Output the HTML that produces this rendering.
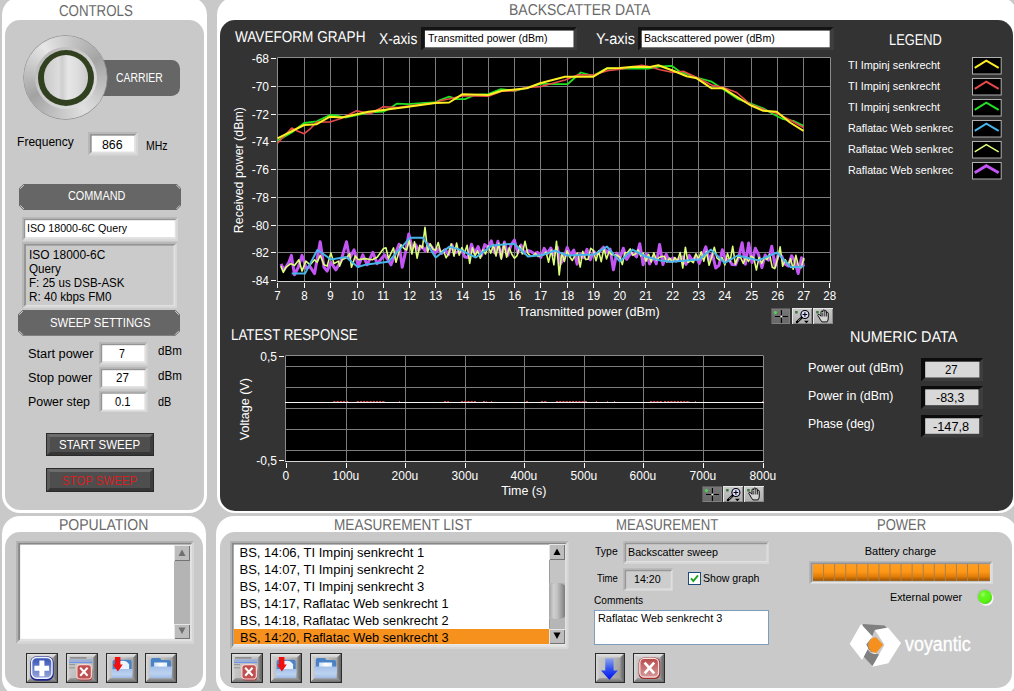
<!DOCTYPE html>
<html><head><meta charset="utf-8"><title>ui</title>
<style>
html,body{margin:0;padding:0;}
body{width:1014px;height:691px;overflow:hidden;background:#c9c9c9;font-family:"Liberation Sans", sans-serif;position:relative;}
#root{position:absolute;left:0;top:0;width:1014px;height:691px;overflow:hidden;}
#root div{box-sizing:content-box;}
</style></head><body><div id="root">
<div style="position:absolute;left:2px;top:-3px;width:205px;height:516.2px;background:#fff;border-radius:18px;"></div>
<div style="position:absolute;left:5px;top:20.2px;width:198.8px;height:490.3px;background:#c9c9c9;border-radius:15px;"></div>
<div style="position:absolute;left:217px;top:-3px;width:800px;height:516.2px;background:#fff;border-radius:18px;"></div>
<div style="position:absolute;left:220.3px;top:20.3px;width:792.7px;height:490.5px;background:#333;border-radius:15px;"></div>
<div style="position:absolute;left:2px;top:515.7px;width:204px;height:180px;background:#fff;border-radius:18px;"></div>
<div style="position:absolute;left:5px;top:532.3px;width:197.6px;height:156.2px;background:#c9c9c9;border-radius:15px;"></div>
<div style="position:absolute;left:216px;top:515.7px;width:801px;height:180px;background:#fff;border-radius:18px;"></div>
<div style="position:absolute;left:219.5px;top:532.3px;width:792.5px;height:156.2px;background:#c9c9c9;border-radius:15px;"></div>
<svg style="position:absolute;left:0;top:0" width="1014" height="691" viewBox="0 0 1014 691"><rect x="277" y="57" width="554" height="225" fill="#000"/><line x1="304.5" y1="57" x2="304.5" y2="282" stroke="#7c7c7c" stroke-width="1"/><line x1="330.5" y1="57" x2="330.5" y2="282" stroke="#7c7c7c" stroke-width="1"/><line x1="357.5" y1="57" x2="357.5" y2="282" stroke="#7c7c7c" stroke-width="1"/><line x1="383.5" y1="57" x2="383.5" y2="282" stroke="#7c7c7c" stroke-width="1"/><line x1="409.5" y1="57" x2="409.5" y2="282" stroke="#7c7c7c" stroke-width="1"/><line x1="435.5" y1="57" x2="435.5" y2="282" stroke="#7c7c7c" stroke-width="1"/><line x1="462.5" y1="57" x2="462.5" y2="282" stroke="#7c7c7c" stroke-width="1"/><line x1="488.5" y1="57" x2="488.5" y2="282" stroke="#7c7c7c" stroke-width="1"/><line x1="514.5" y1="57" x2="514.5" y2="282" stroke="#7c7c7c" stroke-width="1"/><line x1="540.5" y1="57" x2="540.5" y2="282" stroke="#7c7c7c" stroke-width="1"/><line x1="567.5" y1="57" x2="567.5" y2="282" stroke="#7c7c7c" stroke-width="1"/><line x1="593.5" y1="57" x2="593.5" y2="282" stroke="#7c7c7c" stroke-width="1"/><line x1="619.5" y1="57" x2="619.5" y2="282" stroke="#7c7c7c" stroke-width="1"/><line x1="645.5" y1="57" x2="645.5" y2="282" stroke="#7c7c7c" stroke-width="1"/><line x1="672.5" y1="57" x2="672.5" y2="282" stroke="#7c7c7c" stroke-width="1"/><line x1="698.5" y1="57" x2="698.5" y2="282" stroke="#7c7c7c" stroke-width="1"/><line x1="724.5" y1="57" x2="724.5" y2="282" stroke="#7c7c7c" stroke-width="1"/><line x1="751.5" y1="57" x2="751.5" y2="282" stroke="#7c7c7c" stroke-width="1"/><line x1="777.5" y1="57" x2="777.5" y2="282" stroke="#7c7c7c" stroke-width="1"/><line x1="803.5" y1="57" x2="803.5" y2="282" stroke="#7c7c7c" stroke-width="1"/><line x1="277" y1="252.5" x2="831" y2="252.5" stroke="#7c7c7c" stroke-width="1"/><line x1="277" y1="225.5" x2="831" y2="225.5" stroke="#7c7c7c" stroke-width="1"/><line x1="277" y1="197.5" x2="831" y2="197.5" stroke="#7c7c7c" stroke-width="1"/><line x1="277" y1="169.5" x2="831" y2="169.5" stroke="#7c7c7c" stroke-width="1"/><line x1="277" y1="141.5" x2="831" y2="141.5" stroke="#7c7c7c" stroke-width="1"/><line x1="277" y1="114.5" x2="831" y2="114.5" stroke="#7c7c7c" stroke-width="1"/><line x1="277" y1="86.5" x2="831" y2="86.5" stroke="#7c7c7c" stroke-width="1"/><path d="M277.5 282V57.5H830.5V282" fill="none" stroke="#8c8c8c" stroke-width="1"/><polyline points="281.0,264.0 284.0,270.0 288.9,262.3 291.4,255.4 294.5,274.8 298.3,267.3 302.0,255.4 306.4,268.6 309.6,266.1 314.6,273.6 320.2,241.7 324.0,267.3 327.1,271.1 330.9,262.3 335.9,269.8 340.9,261.1 346.5,241.7 349.6,258.6 354.0,249.8 358.4,266.1 362.8,254.8 367.2,264.8 372.8,252.3 377.2,263.6 384.7,254.8 391.0,264.8 399.1,244.2 402.2,267.3 405.5,252.1 408.8,234.0 412.1,247.9 415.4,244.6 418.7,250.3 422.0,246.1 425.3,251.1 428.6,244.0 431.9,247.0 435.2,252.8 438.5,248.7 441.8,253.3 445.1,249.5 448.4,254.8 451.7,244.6 455.0,252.6 458.3,251.9 461.6,250.3 464.9,257.0 468.2,257.5 471.5,244.3 474.8,253.2 478.1,246.6 481.4,255.9 484.7,244.6 488.0,247.6 491.3,240.8 494.6,252.9 497.9,241.3 501.2,257.4 504.5,242.0 507.8,255.4 511.1,244.9 514.4,240.0 517.7,253.0 521.0,245.1 524.3,253.1 527.6,250.4 530.9,251.4 534.2,253.7 537.5,252.4 540.8,257.4 544.1,248.4 547.4,253.5 550.7,248.0 554.0,255.0 557.3,247.0 560.6,263.7 563.9,258.2 567.2,247.5 570.5,255.2 573.8,250.0 577.1,264.1 580.4,253.9 583.7,257.5 587.0,249.4 590.3,259.8 593.6,251.4 596.9,254.5 600.2,250.7 603.5,247.2 606.8,252.3 610.1,249.0 613.4,269.8 616.7,253.1 620.0,257.9 623.3,248.2 626.6,259.4 629.9,254.5 633.2,253.2 636.5,256.8 639.8,243.7 643.1,264.7 646.4,254.1 649.7,263.9 653.0,256.5 656.3,263.8 659.6,244.4 662.9,264.5 666.2,254.3 669.5,261.5 672.8,257.9 676.1,261.1 679.4,259.1 682.7,256.8 686.0,264.3 689.3,255.4 692.6,261.0 695.9,255.9 699.2,263.5 702.5,255.3 705.8,246.9 709.1,259.8 712.4,253.8 715.7,268.0 719.0,265.3 722.3,249.7 725.6,259.4 728.9,259.4 732.2,264.6 735.5,264.8 738.8,257.0 742.1,242.8 745.4,264.3 748.7,243.0 752.0,262.6 755.3,248.2 758.6,254.8 761.9,267.6 765.2,255.0 768.5,260.2 771.8,246.2 775.1,266.6 778.4,253.6 781.7,256.2 785.0,264.0 788.3,266.1 791.6,255.7 794.9,261.6 798.2,273.5 801.5,257.7 803.6,266.5" fill="none" stroke="#c455f5" stroke-width="3" stroke-linejoin="round" stroke-linejoin="miter"/><polyline points="280.8,266.1 283.3,272.3 285.8,267.3 290.8,263.6 294.5,265.5 298.9,259.8 302.0,271.1 305.8,261.1 310.2,264.8 314.6,259.8 317.1,262.3 320.2,255.4 324.0,264.8 327.1,266.1 330.9,252.9 334.0,263.6 338.4,261.1 339.6,266.1 342.1,259.8 347.1,257.3 349.6,253.6 351.5,267.3 355.3,256.1 358.4,259.8 364.7,258.6 372.2,259.8 377.2,257.3 383.5,248.5 386.0,247.9 388.5,258.6 393.5,247.9 396.0,262.3 401.0,244.8 404.0,248.5 406.6,250.0 409.3,240.4 411.9,254.0 414.5,241.9 417.1,258.1 419.8,245.4 422.4,248.0 425.0,227.3 427.7,251.9 430.3,243.8 432.9,249.1 435.6,250.3 438.2,242.5 440.8,252.9 443.4,250.2 446.1,257.8 448.7,253.5 451.3,243.9 454.0,256.2 456.6,243.1 459.2,255.2 461.9,247.6 464.5,253.0 467.1,245.3 469.7,263.4 472.4,247.7 475.0,255.8 477.6,250.9 480.3,258.3 482.9,249.8 485.5,254.0 488.2,246.0 490.8,253.1 493.4,244.9 496.0,256.0 498.7,243.3 501.3,259.1 503.9,243.2 506.6,257.2 509.2,247.7 511.8,254.3 514.5,258.3 517.1,255.6 519.7,245.7 522.3,253.9 525.0,241.3 527.6,252.9 530.2,255.7 532.9,256.2 535.5,253.4 538.1,256.5 540.8,255.4 543.4,254.8 546.0,252.0 548.6,262.2 551.3,250.1 553.9,264.8 556.5,241.3 559.2,274.9 561.8,253.0 564.4,261.4 567.1,250.8 569.7,256.7 572.3,260.5 574.9,255.6 577.6,253.2 580.2,267.0 582.8,251.4 585.5,259.4 588.1,259.3 590.7,248.3 593.4,250.3 596.0,260.8 598.6,250.9 601.2,261.6 603.9,248.3 606.5,258.9 609.1,251.6 611.8,254.7 614.4,254.8 617.0,255.3 619.7,257.0 622.3,264.6 624.9,252.7 627.5,252.5 630.2,248.9 632.8,255.3 635.4,254.1 638.1,249.9 640.7,256.0 643.3,253.1 646.0,261.3 648.6,254.2 651.2,262.0 653.8,252.8 656.5,260.2 659.1,257.5 661.7,256.5 664.4,256.4 667.0,262.1 669.6,258.0 672.3,262.3 674.9,257.5 677.5,260.9 680.1,252.5 682.8,268.0 685.4,247.2 688.0,262.5 690.7,260.6 693.3,262.7 695.9,253.7 698.6,259.1 701.2,251.8 703.8,261.3 706.4,251.4 709.1,265.3 711.7,257.3 714.3,247.2 717.0,258.1 719.6,260.0 722.2,257.7 724.9,264.9 727.5,253.4 730.1,261.4 732.7,246.3 735.4,264.3 738.0,256.9 740.6,257.4 743.3,263.5 745.9,256.9 748.5,261.5 751.2,256.1 753.8,257.9 756.4,270.0 759.0,257.3 761.7,263.5 764.3,257.5 766.9,259.6 769.6,254.4 772.2,267.2 774.8,268.6 777.5,259.6 780.1,246.9 782.7,266.3 785.3,259.8 788.0,264.9 790.6,258.8 793.2,269.2 795.9,255.4 798.5,266.4 801.1,267.9 803.8,258.4 803.6,261.3" fill="none" stroke="#dcff7a" stroke-width="1.6" stroke-linejoin="round" /><polyline points="291.7,273.6 305.0,273.6 317.3,250.0 331.0,259.4 346.0,257.0 357.8,267.0 366.6,264.4 388.3,261.8 410.0,237.8 422.9,237.8 435.7,257.5 449.5,246.6 460.0,249.6 475.8,257.5 491.6,245.6 514.2,243.7 528.0,256.5 542.8,255.0 554.7,250.6 567.5,255.5 594.0,254.5 607.0,246.6 619.8,261.4 632.6,249.6 645.4,256.5 660.0,260.4 671.6,261.8 699.2,259.4 711.0,249.6 724.8,263.0 737.6,255.5 750.5,258.5 758.3,260.4 777.0,252.5 790.9,267.3 803.7,266.4" fill="none" stroke="#46b4ea" stroke-width="2" stroke-linejoin="round" /><polyline points="277.5,140.8 291.7,132.5 304.2,123.0 316.7,121.3 330.0,115.0 336.7,115.5 345.0,117.5 368.3,112.5 383.3,111.7 390.0,108.3 396.7,103.7 408.3,104.2 425.0,103.0 435.0,102.5 440.0,100.0 449.2,96.7 456.7,99.2 465.0,99.2 475.0,95.0 488.3,94.2 500.8,89.2 515.0,90.8 528.3,87.5 541.7,83.7 555.0,84.2 567.5,84.2 580.8,72.5 593.3,75.8 606.7,68.3 633.3,68.7 648.3,68.7 660.0,66.3 671.7,65.8 680.0,71.7 696.7,77.5 711.7,81.7 723.3,89.2 738.3,99.2 750.0,103.3 763.3,108.3 773.3,114.2 783.3,119.2 793.3,120.8 803.5,125.8" fill="none" stroke="#22e022" stroke-width="1.8" stroke-linejoin="round" /><polyline points="277.5,143.3 291.7,128.0 296.7,130.8 304.2,133.7 310.8,128.3 316.7,122.0 330.0,122.0 341.7,118.3 356.7,110.8 361.7,111.7 370.0,113.7 383.3,106.7 398.3,107.5 410.0,105.8 435.0,103.0 440.0,100.8 450.0,98.7 462.5,95.8 488.3,96.3 501.7,91.3 515.0,90.8 526.7,87.5 540.0,86.7 565.0,80.0 578.3,74.7 593.3,75.0 607.5,70.8 620.0,69.2 641.7,65.3 650.0,66.7 660.0,69.7 673.3,72.5 683.3,71.3 696.7,77.5 711.7,85.0 723.3,87.5 736.7,92.5 750.0,104.2 766.7,110.8 776.7,113.3 790.0,120.0 803.5,127.5" fill="none" stroke="#e84a4a" stroke-width="1.6" stroke-linejoin="round" /><polyline points="277.5,138.3 304.2,125.0 316.7,124.2 330.0,116.7 341.7,117.5 368.3,111.7 383.3,110.0 408.3,106.7 435.0,103.0 449.2,102.5 462.5,94.2 488.3,95.0 501.7,90.8 526.7,88.3 540.0,83.3 565.0,76.7 593.3,76.7 607.5,68.2 620.0,68.0 633.3,66.7 650.0,67.0 658.3,65.3 673.3,70.8 686.7,76.3 696.7,78.3 711.7,88.3 723.3,88.3 750.0,105.0 763.3,110.8 776.7,111.7 790.0,122.5 803.5,130.8" fill="none" stroke="#ffee22" stroke-width="2.0" stroke-linejoin="round" /><line x1="277" y1="281.5" x2="831" y2="281.5" stroke="#d2d2d2" stroke-width="1"/><line x1="277.5" y1="283" x2="277.5" y2="288" stroke="#fff" stroke-width="1"/><line x1="304.5" y1="283" x2="304.5" y2="288" stroke="#fff" stroke-width="1"/><line x1="330.5" y1="283" x2="330.5" y2="288" stroke="#fff" stroke-width="1"/><line x1="357.5" y1="283" x2="357.5" y2="288" stroke="#fff" stroke-width="1"/><line x1="383.5" y1="283" x2="383.5" y2="288" stroke="#fff" stroke-width="1"/><line x1="409.5" y1="283" x2="409.5" y2="288" stroke="#fff" stroke-width="1"/><line x1="435.5" y1="283" x2="435.5" y2="288" stroke="#fff" stroke-width="1"/><line x1="462.5" y1="283" x2="462.5" y2="288" stroke="#fff" stroke-width="1"/><line x1="488.5" y1="283" x2="488.5" y2="288" stroke="#fff" stroke-width="1"/><line x1="514.5" y1="283" x2="514.5" y2="288" stroke="#fff" stroke-width="1"/><line x1="540.5" y1="283" x2="540.5" y2="288" stroke="#fff" stroke-width="1"/><line x1="567.5" y1="283" x2="567.5" y2="288" stroke="#fff" stroke-width="1"/><line x1="593.5" y1="283" x2="593.5" y2="288" stroke="#fff" stroke-width="1"/><line x1="619.5" y1="283" x2="619.5" y2="288" stroke="#fff" stroke-width="1"/><line x1="645.5" y1="283" x2="645.5" y2="288" stroke="#fff" stroke-width="1"/><line x1="672.5" y1="283" x2="672.5" y2="288" stroke="#fff" stroke-width="1"/><line x1="698.5" y1="283" x2="698.5" y2="288" stroke="#fff" stroke-width="1"/><line x1="724.5" y1="283" x2="724.5" y2="288" stroke="#fff" stroke-width="1"/><line x1="751.5" y1="283" x2="751.5" y2="288" stroke="#fff" stroke-width="1"/><line x1="777.5" y1="283" x2="777.5" y2="288" stroke="#fff" stroke-width="1"/><line x1="803.5" y1="283" x2="803.5" y2="288" stroke="#fff" stroke-width="1"/><line x1="829.5" y1="283" x2="829.5" y2="288" stroke="#fff" stroke-width="1"/><line x1="271" y1="280.5" x2="276" y2="280.5" stroke="#fff" stroke-width="1"/><line x1="271" y1="252.5" x2="276" y2="252.5" stroke="#fff" stroke-width="1"/><line x1="271" y1="225.5" x2="276" y2="225.5" stroke="#fff" stroke-width="1"/><line x1="271" y1="197.5" x2="276" y2="197.5" stroke="#fff" stroke-width="1"/><line x1="271" y1="169.5" x2="276" y2="169.5" stroke="#fff" stroke-width="1"/><line x1="271" y1="141.5" x2="276" y2="141.5" stroke="#fff" stroke-width="1"/><line x1="271" y1="114.5" x2="276" y2="114.5" stroke="#fff" stroke-width="1"/><line x1="271" y1="86.5" x2="276" y2="86.5" stroke="#fff" stroke-width="1"/><line x1="271" y1="58.5" x2="276" y2="58.5" stroke="#fff" stroke-width="1"/><rect x="285" y="355" width="479" height="107" fill="#000"/><line x1="346.5" y1="355" x2="346.5" y2="462" stroke="#7c7c7c" stroke-width="1"/><line x1="405.5" y1="355" x2="405.5" y2="462" stroke="#7c7c7c" stroke-width="1"/><line x1="465.5" y1="355" x2="465.5" y2="462" stroke="#7c7c7c" stroke-width="1"/><line x1="524.5" y1="355" x2="524.5" y2="462" stroke="#7c7c7c" stroke-width="1"/><line x1="584.5" y1="355" x2="584.5" y2="462" stroke="#7c7c7c" stroke-width="1"/><line x1="643.5" y1="355" x2="643.5" y2="462" stroke="#7c7c7c" stroke-width="1"/><line x1="703.5" y1="355" x2="703.5" y2="462" stroke="#7c7c7c" stroke-width="1"/><line x1="285" y1="366.5" x2="764" y2="366.5" stroke="#7c7c7c" stroke-width="1"/><line x1="285" y1="387.5" x2="764" y2="387.5" stroke="#7c7c7c" stroke-width="1"/><line x1="285" y1="408.5" x2="764" y2="408.5" stroke="#7c7c7c" stroke-width="1"/><line x1="285" y1="429.5" x2="764" y2="429.5" stroke="#7c7c7c" stroke-width="1"/><line x1="285" y1="450.5" x2="764" y2="450.5" stroke="#7c7c7c" stroke-width="1"/><path d="M285.5 462V355.5H763.5V462" fill="none" stroke="#8c8c8c" stroke-width="1"/><line x1="285" y1="461.5" x2="764" y2="461.5" stroke="#d4d4d4" stroke-width="1"/><line x1="285" y1="402.5" x2="764" y2="402.5" stroke="#f6f6f6" stroke-width="1"/><line x1="333.3" y1="401.5" x2="349" y2="401.5" stroke="#e05050" stroke-width="0.9" stroke-dasharray="2.2 1"/><line x1="356.7" y1="401.5" x2="385" y2="401.5" stroke="#e05050" stroke-width="0.9" stroke-dasharray="2.2 1"/><line x1="399" y1="401.5" x2="400" y2="401.5" stroke="#e05050" stroke-width="0.9" stroke-dasharray="2.2 1"/><line x1="444" y1="401.5" x2="449" y2="401.5" stroke="#e05050" stroke-width="0.9" stroke-dasharray="2.2 1"/><line x1="461" y1="401.5" x2="476" y2="401.5" stroke="#e05050" stroke-width="0.9" stroke-dasharray="2.2 1"/><line x1="483" y1="401.5" x2="487" y2="401.5" stroke="#e05050" stroke-width="0.9" stroke-dasharray="2.2 1"/><line x1="491" y1="401.5" x2="492" y2="401.5" stroke="#e05050" stroke-width="0.9" stroke-dasharray="2.2 1"/><line x1="526" y1="401.5" x2="528" y2="401.5" stroke="#e05050" stroke-width="0.9" stroke-dasharray="2.2 1"/><line x1="541" y1="401.5" x2="547" y2="401.5" stroke="#e05050" stroke-width="0.9" stroke-dasharray="2.2 1"/><line x1="556" y1="401.5" x2="587" y2="401.5" stroke="#e05050" stroke-width="0.9" stroke-dasharray="2.2 1"/><line x1="596" y1="401.5" x2="597" y2="401.5" stroke="#e05050" stroke-width="0.9" stroke-dasharray="2.2 1"/><line x1="607" y1="401.5" x2="608" y2="401.5" stroke="#e05050" stroke-width="0.9" stroke-dasharray="2.2 1"/><line x1="614" y1="401.5" x2="615" y2="401.5" stroke="#e05050" stroke-width="0.9" stroke-dasharray="2.2 1"/><line x1="650" y1="401.5" x2="662" y2="401.5" stroke="#e05050" stroke-width="0.9" stroke-dasharray="2.2 1"/><line x1="664" y1="401.5" x2="690" y2="401.5" stroke="#e05050" stroke-width="0.9" stroke-dasharray="2.2 1"/><line x1="695" y1="401.5" x2="696" y2="401.5" stroke="#e05050" stroke-width="0.9" stroke-dasharray="2.2 1"/><line x1="762" y1="401.5" x2="763" y2="401.5" stroke="#e05050" stroke-width="0.9" stroke-dasharray="2.2 1"/><line x1="286.5" y1="463" x2="286.5" y2="468" stroke="#fff" stroke-width="1"/><line x1="346.5" y1="463" x2="346.5" y2="468" stroke="#fff" stroke-width="1"/><line x1="405.5" y1="463" x2="405.5" y2="468" stroke="#fff" stroke-width="1"/><line x1="465.5" y1="463" x2="465.5" y2="468" stroke="#fff" stroke-width="1"/><line x1="524.5" y1="463" x2="524.5" y2="468" stroke="#fff" stroke-width="1"/><line x1="584.5" y1="463" x2="584.5" y2="468" stroke="#fff" stroke-width="1"/><line x1="643.5" y1="463" x2="643.5" y2="468" stroke="#fff" stroke-width="1"/><line x1="703.5" y1="463" x2="703.5" y2="468" stroke="#fff" stroke-width="1"/><line x1="763.5" y1="463" x2="763.5" y2="468" stroke="#fff" stroke-width="1"/><line x1="279" y1="356.5" x2="284" y2="356.5" stroke="#fff" stroke-width="1"/><line x1="279" y1="460.5" x2="284" y2="460.5" stroke="#fff" stroke-width="1"/></svg>
<div style="position:absolute;left:58.70px;top:2.60px;font-size:15.8px;line-height:15.8px;color:#686868;white-space:nowrap;transform:rotate(0.03deg) scale(0.8407,1.0000);transform-origin:left 13.40px;">CONTROLS</div>
<div style="position:absolute;left:508.70px;top:1.60px;font-size:15.8px;line-height:15.8px;color:#686868;white-space:nowrap;transform:rotate(0.03deg) scale(0.8844,1.0000);transform-origin:left 13.40px;">BACKSCATTER DATA</div>
<div style="position:absolute;left:58.70px;top:516.60px;font-size:15.8px;line-height:15.8px;color:#686868;white-space:nowrap;transform:rotate(0.03deg) scale(0.8871,1.0000);transform-origin:left 13.40px;">POPULATION</div>
<div style="position:absolute;left:333.70px;top:516.60px;font-size:15.8px;line-height:15.8px;color:#686868;white-space:nowrap;transform:rotate(0.03deg) scale(0.8605,1.0000);transform-origin:left 13.40px;">MEASUREMENT LIST</div>
<div style="position:absolute;left:616.30px;top:516.60px;font-size:15.8px;line-height:15.8px;color:#686868;white-space:nowrap;transform:rotate(0.03deg) scale(0.8332,1.0000);transform-origin:left 13.40px;">MEASUREMENT</div>
<div style="position:absolute;left:876.70px;top:516.60px;font-size:15.8px;line-height:15.8px;color:#686868;white-space:nowrap;transform:rotate(0.03deg) scale(0.8226,1.0000);transform-origin:left 13.40px;">POWER</div>
<div style="position:absolute;left:99px;top:59.9px;width:81px;height:35.8px;background:#666;border-radius:0 8.5px 8.5px 0;"></div>
<div style="position:absolute;left:116.30px;top:72.00px;font-size:12px;line-height:12px;color:#fff;white-space:nowrap;transform:scale(0.8646,1.0000);transform-origin:left 10.00px;">CARRIER</div>
<div style="position:absolute;left:24.3px;top:36.1px;width:83px;height:83px;border-radius:50%;background:conic-gradient(from -35deg,#e6e6e6,#c4c4c4 45deg,#a4a4a4 95deg,#c0c0c0 140deg,#e0e0e0 185deg,#c2c2c2 230deg,#a2a2a2 275deg,#c6c6c6 320deg,#e6e6e6);box-shadow:0 0 0 0.7px #8e8e8e;"></div>
<div style="position:absolute;left:34.7px;top:46.7px;width:62px;height:62px;border-radius:50%;background:linear-gradient(135deg,#b4b4b4,#cecece 50%,#e2e2e2);"></div>
<div style="position:absolute;left:37.9px;top:49.5px;width:56.5px;height:56.5px;border-radius:50%;background:#31401f;"></div>
<div style="position:absolute;left:43.8px;top:55.4px;width:44.7px;height:44.7px;border-radius:50%;background:linear-gradient(90deg,#cacaca,#dcdcdc 33%,#cecece 41%,#e6e6e6 55%,#dedede 75%,#cacaca);"></div>
<div style="position:absolute;left:17.10px;top:136.00px;font-size:12px;line-height:12px;color:#000;white-space:nowrap;">Frequency</div>
<svg style="position:absolute;left:88.00px;top:132.30px" width="50.10" height="23.50" viewBox="0 0 50.10 23.50"><path d="M0.00 23.50L50.10 23.50L50.10 0.00L48.15 1.90L48.15 21.60L1.90 21.60Z" fill="#d6d6d6"/><path d="M0.00 0.00L50.10 0.00L48.15 1.90L1.90 1.90L1.90 21.60L0.00 23.50Z" fill="#b8b8b8"/><path d="M1.90 21.60L48.15 21.60L48.15 1.90L46.20 3.80L46.20 19.70L3.80 19.70Z" fill="#e1e1e1"/><path d="M1.90 1.90L48.15 1.90L46.20 3.80L3.80 3.80L3.80 19.70L1.90 21.60Z" fill="#949494"/><rect x="3.80" y="3.80" width="42.40" height="15.90" fill="#fff"/></svg>
<div style="position:absolute;left:102.20px;top:139.00px;font-size:12px;line-height:12px;color:#000;white-space:nowrap;transform:scale(1.0286,1.0000);transform-origin:left 10.00px;">866</div>
<div style="position:absolute;left:146.40px;top:140.00px;font-size:12px;line-height:12px;color:#000;white-space:nowrap;transform:scale(0.8758,1.0000);transform-origin:left 10.00px;">MHz</div>
<svg style="position:absolute;left:18.80px;top:183.80px" width="162.30" height="26.10" viewBox="0 0 162.30 26.10"><path d="M4.6 0H157.70L162.30 4.6V21.50L157.70 26.10H4.6L0 21.50V4.6Z" fill="#666"/><path d="M1.10 4.90L4.90 1.10M157.40 1.10L161.20 4.90M1.10 21.20L4.90 25.00M157.40 25.00L161.20 21.20" stroke="#d8d8d8" stroke-width="0.9" fill="none"/></svg><div style="position:absolute;left:68.30px;top:190.00px;font-size:12px;line-height:12px;color:#fff;white-space:nowrap;transform:scale(0.9063,1.0000);transform-origin:left 10.00px;">COMMAND</div>
<svg style="position:absolute;left:18.00px;top:310.00px" width="162.00" height="25.80" viewBox="0 0 162.00 25.80"><path d="M4.6 0H157.40L162.00 4.6V21.20L157.40 25.80H4.6L0 21.20V4.6Z" fill="#666"/><path d="M1.10 4.90L4.90 1.10M157.10 1.10L160.90 4.90M1.10 20.90L4.90 24.70M157.10 24.70L160.90 20.90" stroke="#d8d8d8" stroke-width="0.9" fill="none"/></svg><div style="position:absolute;left:50.30px;top:317.00px;font-size:12px;line-height:12px;color:#fff;white-space:nowrap;transform:scale(0.9438,1.0000);transform-origin:left 10.00px;">SWEEP SETTINGS</div>
<svg style="position:absolute;left:21.70px;top:216.90px" width="156.10" height="24.40" viewBox="0 0 156.10 24.40"><path d="M0.00 24.40L156.10 24.40L156.10 0.00L154.50 1.65L154.50 22.25L1.65 22.25Z" fill="#d6d6d6"/><path d="M0.00 0.00L156.10 0.00L154.50 1.65L1.65 1.65L1.65 22.25L0.00 24.40Z" fill="#b8b8b8"/><path d="M1.65 22.25L154.50 22.25L154.50 1.65L152.90 3.30L152.90 20.10L3.30 20.10Z" fill="#e1e1e1"/><path d="M1.65 1.65L154.50 1.65L152.90 3.30L3.30 3.30L3.30 20.10L1.65 22.25Z" fill="#949494"/><rect x="3.30" y="3.30" width="149.60" height="16.80" fill="#fff"/></svg>
<div style="position:absolute;left:27.00px;top:222.50px;font-size:11px;line-height:11px;color:#000;white-space:nowrap;transform:scale(0.9679,1.0000);transform-origin:left 9.50px;">ISO 18000-6C Query</div>
<svg style="position:absolute;left:21.70px;top:242.00px" width="155.80" height="66.30" viewBox="0 0 155.80 66.30"><path d="M0.00 66.30L155.80 66.30L155.80 0.00L153.55 1.90L153.55 64.50L2.05 64.50Z" fill="#d6d6d6"/><path d="M0.00 0.00L155.80 0.00L153.55 1.90L2.05 1.90L2.05 64.50L0.00 66.30Z" fill="#b8b8b8"/><path d="M2.05 64.50L153.55 64.50L153.55 1.90L151.30 3.80L151.30 62.70L4.10 62.70Z" fill="#e1e1e1"/><path d="M2.05 1.90L153.55 1.90L151.30 3.80L4.10 3.80L4.10 62.70L2.05 64.50Z" fill="#949494"/><rect x="4.10" y="3.80" width="147.20" height="58.90" fill="#cbcbcb"/></svg>
<div style="position:absolute;left:28.70px;top:249.00px;font-size:12px;line-height:12px;color:#000;white-space:nowrap;transform:scale(0.9944,1.0000);transform-origin:left 10.00px;">ISO 18000-6C</div>
<div style="position:absolute;left:28.70px;top:263.00px;font-size:12px;line-height:12px;color:#000;white-space:nowrap;transform:scale(0.9730,1.0000);transform-origin:left 10.00px;">Query</div>
<div style="position:absolute;left:28.70px;top:277.00px;font-size:12px;line-height:12px;color:#000;white-space:nowrap;transform:scale(0.9609,1.0000);transform-origin:left 10.00px;">F: 25 us DSB-ASK</div>
<div style="position:absolute;left:28.70px;top:291.00px;font-size:12px;line-height:12px;color:#000;white-space:nowrap;transform:scale(0.9750,1.0000);transform-origin:left 10.00px;">R: 40 kbps FM0</div>
<div style="position:absolute;left:27.50px;top:348.00px;font-size:12px;line-height:12px;color:#000;white-space:nowrap;transform:scale(1.0672,1.0000);transform-origin:left 10.00px;">Start power</div>
<svg style="position:absolute;left:99.20px;top:341.70px" width="48.80" height="23.00" viewBox="0 0 48.80 23.00"><path d="M0.00 23.00L48.80 23.00L48.80 0.00L47.15 1.65L47.15 21.25L1.65 21.25Z" fill="#d6d6d6"/><path d="M0.00 0.00L48.80 0.00L47.15 1.65L1.65 1.65L1.65 21.25L0.00 23.00Z" fill="#b8b8b8"/><path d="M1.65 21.25L47.15 21.25L47.15 1.65L45.50 3.30L45.50 19.50L3.30 19.50Z" fill="#e1e1e1"/><path d="M1.65 1.65L47.15 1.65L45.50 3.30L3.30 3.30L3.30 19.50L1.65 21.25Z" fill="#949494"/><rect x="3.30" y="3.30" width="42.20" height="16.20" fill="#fff"/></svg>
<div style="position:absolute;left:119.30px;top:348.00px;font-size:12px;line-height:12px;color:#000;white-space:nowrap;transform:scale(0.8838,1.0000);transform-origin:left 10.00px;">7</div>
<div style="position:absolute;left:157.50px;top:345.00px;font-size:12px;line-height:12px;color:#000;white-space:nowrap;transform:scale(0.9645,1.0000);transform-origin:left 10.00px;">dBm</div>
<div style="position:absolute;left:27.50px;top:372.00px;font-size:12px;line-height:12px;color:#000;white-space:nowrap;transform:scale(1.0573,1.0000);transform-origin:left 10.00px;">Stop power</div>
<svg style="position:absolute;left:99.20px;top:366.70px" width="48.80" height="22.50" viewBox="0 0 48.80 22.50"><path d="M0.00 22.50L48.80 22.50L48.80 0.00L47.15 1.65L47.15 20.80L1.65 20.80Z" fill="#d6d6d6"/><path d="M0.00 0.00L48.80 0.00L47.15 1.65L1.65 1.65L1.65 20.80L0.00 22.50Z" fill="#b8b8b8"/><path d="M1.65 20.80L47.15 20.80L47.15 1.65L45.50 3.30L45.50 19.10L3.30 19.10Z" fill="#e1e1e1"/><path d="M1.65 1.65L47.15 1.65L45.50 3.30L3.30 3.30L3.30 19.10L1.65 20.80Z" fill="#949494"/><rect x="3.30" y="3.30" width="42.20" height="15.80" fill="#fff"/></svg>
<div style="position:absolute;left:116.30px;top:372.00px;font-size:12px;line-height:12px;color:#000;white-space:nowrap;transform:scale(0.9662,1.0000);transform-origin:left 10.00px;">27</div>
<div style="position:absolute;left:157.50px;top:370.00px;font-size:12px;line-height:12px;color:#000;white-space:nowrap;transform:scale(0.9645,1.0000);transform-origin:left 10.00px;">dBm</div>
<div style="position:absolute;left:28.30px;top:396.00px;font-size:12px;line-height:12px;color:#000;white-space:nowrap;transform:scale(1.0326,1.0000);transform-origin:left 10.00px;">Power step</div>
<svg style="position:absolute;left:99.20px;top:390.50px" width="48.80" height="21.50" viewBox="0 0 48.80 21.50"><path d="M0.00 21.50L48.80 21.50L48.80 0.00L47.15 1.40L47.15 20.10L1.65 20.10Z" fill="#d6d6d6"/><path d="M0.00 0.00L48.80 0.00L47.15 1.40L1.65 1.40L1.65 20.10L0.00 21.50Z" fill="#b8b8b8"/><path d="M1.65 20.10L47.15 20.10L47.15 1.40L45.50 2.80L45.50 18.70L3.30 18.70Z" fill="#e1e1e1"/><path d="M1.65 1.40L47.15 1.40L45.50 2.80L3.30 2.80L3.30 18.70L1.65 20.10Z" fill="#949494"/><rect x="3.30" y="2.80" width="42.20" height="15.90" fill="#fff"/></svg>
<div style="position:absolute;left:114.50px;top:396.00px;font-size:12px;line-height:12px;color:#000;white-space:nowrap;transform:scale(0.9288,1.0000);transform-origin:left 10.00px;">0.1</div>
<div style="position:absolute;left:157.50px;top:396.00px;font-size:12px;line-height:12px;color:#000;white-space:nowrap;transform:scale(0.9060,1.0000);transform-origin:left 10.00px;">dB</div>
<div style="position:absolute;left:46.2px;top:433px;width:107.6px;height:22.8px;background:#2a2a2a;"></div><div style="position:absolute;left:47.2px;top:434px;width:99.60000000000001px;height:14.800000000000011px;background:#4e4e4e;border-style:solid;border-width:3px;border-color:#6c6c6c #3c3c3c #363636 #5c5c5c;"></div><div style="position:absolute;left:59.20px;top:439.00px;font-size:12px;line-height:12px;color:#fff;white-space:nowrap;transform:scale(0.9575,1.0000);transform-origin:left 10.00px;">START SWEEP</div>
<div style="position:absolute;left:46.2px;top:468px;width:107.6px;height:23.7px;background:#2a2a2a;"></div><div style="position:absolute;left:47.2px;top:469px;width:99.60000000000001px;height:15.699999999999989px;background:#4e4e4e;border-style:solid;border-width:3px;border-color:#6c6c6c #3c3c3c #363636 #5c5c5c;"></div><div style="position:absolute;left:62.20px;top:475.00px;font-size:12px;line-height:12px;color:#d42222;white-space:nowrap;transform:scale(0.9503,1.0000);transform-origin:left 10.00px;">STOP SWEEP</div>
<div style="position:absolute;left:235.00px;top:28.70px;font-size:15.6px;line-height:15.6px;color:#fff;white-space:nowrap;transform:rotate(0.03deg) scale(0.8703,1.0000);transform-origin:left 13.30px;">WAVEFORM GRAPH</div>
<div style="position:absolute;left:379.20px;top:30.70px;font-size:15.6px;line-height:15.6px;color:#fff;white-space:nowrap;transform:rotate(0.03deg) scale(0.8836,1.0000);transform-origin:left 13.30px;">X-axis</div>
<div style="position:absolute;left:595.80px;top:30.70px;font-size:15.6px;line-height:15.6px;color:#fff;white-space:nowrap;transform:rotate(0.03deg) scale(0.9281,1.0000);transform-origin:left 13.30px;">Y-axis</div>
<svg style="position:absolute;left:420.80px;top:26.70px" width="155.90" height="23.60" viewBox="0 0 155.90 23.60"><path d="M0.00 23.60L155.90 23.60L155.90 0.00L152.50 3.60L152.50 20.30L3.90 20.30Z" fill="#3e3e3e"/><path d="M0.00 0.00L155.90 0.00L152.50 3.60L3.90 3.60L3.90 20.30L0.00 23.60Z" fill="#141414"/><rect x="3.90" y="3.60" width="148.60" height="16.70" fill="#fff"/></svg><div style="position:absolute;left:427.50px;top:32.50px;font-size:11px;line-height:11px;color:#000;white-space:nowrap;transform:scale(0.9662,1.0000);transform-origin:left 9.50px;">Transmitted power (dBm)</div>
<svg style="position:absolute;left:638.30px;top:26.70px" width="195.90" height="23.60" viewBox="0 0 195.90 23.60"><path d="M0.00 23.60L195.90 23.60L195.90 0.00L191.70 3.60L191.70 20.30L3.70 20.30Z" fill="#3e3e3e"/><path d="M0.00 0.00L195.90 0.00L191.70 3.60L3.70 3.60L3.70 20.30L0.00 23.60Z" fill="#141414"/><rect x="3.70" y="3.60" width="188.00" height="16.70" fill="#fff"/></svg><div style="position:absolute;left:644.20px;top:32.50px;font-size:11px;line-height:11px;color:#000;white-space:nowrap;transform:scale(0.9638,1.0000);transform-origin:left 9.50px;">Backscattered power (dBm)</div>
<div style="position:absolute;left:889.20px;top:31.70px;font-size:15.6px;line-height:15.6px;color:#fff;white-space:nowrap;transform:rotate(0.03deg) scale(0.8230,1.0000);transform-origin:left 13.30px;">LEGEND</div>
<div style="position:absolute;left:251.65px;top:275.00px;font-size:12px;line-height:12px;color:#fff;white-space:nowrap;">-84</div>
<div style="position:absolute;left:251.65px;top:247.00px;font-size:12px;line-height:12px;color:#fff;white-space:nowrap;">-82</div>
<div style="position:absolute;left:251.65px;top:220.00px;font-size:12px;line-height:12px;color:#fff;white-space:nowrap;">-80</div>
<div style="position:absolute;left:251.65px;top:192.00px;font-size:12px;line-height:12px;color:#fff;white-space:nowrap;">-78</div>
<div style="position:absolute;left:251.65px;top:164.00px;font-size:12px;line-height:12px;color:#fff;white-space:nowrap;">-76</div>
<div style="position:absolute;left:251.65px;top:136.00px;font-size:12px;line-height:12px;color:#fff;white-space:nowrap;">-74</div>
<div style="position:absolute;left:251.65px;top:109.00px;font-size:12px;line-height:12px;color:#fff;white-space:nowrap;">-72</div>
<div style="position:absolute;left:251.65px;top:81.00px;font-size:12px;line-height:12px;color:#fff;white-space:nowrap;">-70</div>
<div style="position:absolute;left:251.65px;top:53.00px;font-size:12px;line-height:12px;color:#fff;white-space:nowrap;">-68</div>
<div style="position:absolute;left:273.96px;top:290.00px;font-size:12px;line-height:12px;color:#fff;white-space:nowrap;transform:scale(0.9600,1.0000);transform-origin:center 10.00px;">7</div>
<div style="position:absolute;left:300.96px;top:290.00px;font-size:12px;line-height:12px;color:#fff;white-space:nowrap;transform:scale(0.9600,1.0000);transform-origin:center 10.00px;">8</div>
<div style="position:absolute;left:326.96px;top:290.00px;font-size:12px;line-height:12px;color:#fff;white-space:nowrap;transform:scale(0.9600,1.0000);transform-origin:center 10.00px;">9</div>
<div style="position:absolute;left:350.62px;top:290.00px;font-size:12px;line-height:12px;color:#fff;white-space:nowrap;transform:scale(0.9600,1.0000);transform-origin:center 10.00px;">10</div>
<div style="position:absolute;left:377.07px;top:290.00px;font-size:12px;line-height:12px;color:#fff;white-space:nowrap;transform:scale(0.9600,1.0000);transform-origin:center 10.00px;">11</div>
<div style="position:absolute;left:402.62px;top:290.00px;font-size:12px;line-height:12px;color:#fff;white-space:nowrap;transform:scale(0.9600,1.0000);transform-origin:center 10.00px;">12</div>
<div style="position:absolute;left:428.62px;top:290.00px;font-size:12px;line-height:12px;color:#fff;white-space:nowrap;transform:scale(0.9600,1.0000);transform-origin:center 10.00px;">13</div>
<div style="position:absolute;left:455.62px;top:290.00px;font-size:12px;line-height:12px;color:#fff;white-space:nowrap;transform:scale(0.9600,1.0000);transform-origin:center 10.00px;">14</div>
<div style="position:absolute;left:481.62px;top:290.00px;font-size:12px;line-height:12px;color:#fff;white-space:nowrap;transform:scale(0.9600,1.0000);transform-origin:center 10.00px;">15</div>
<div style="position:absolute;left:507.62px;top:290.00px;font-size:12px;line-height:12px;color:#fff;white-space:nowrap;transform:scale(0.9600,1.0000);transform-origin:center 10.00px;">16</div>
<div style="position:absolute;left:533.62px;top:290.00px;font-size:12px;line-height:12px;color:#fff;white-space:nowrap;transform:scale(0.9600,1.0000);transform-origin:center 10.00px;">17</div>
<div style="position:absolute;left:560.62px;top:290.00px;font-size:12px;line-height:12px;color:#fff;white-space:nowrap;transform:scale(0.9600,1.0000);transform-origin:center 10.00px;">18</div>
<div style="position:absolute;left:586.62px;top:290.00px;font-size:12px;line-height:12px;color:#fff;white-space:nowrap;transform:scale(0.9600,1.0000);transform-origin:center 10.00px;">19</div>
<div style="position:absolute;left:612.62px;top:290.00px;font-size:12px;line-height:12px;color:#fff;white-space:nowrap;transform:scale(0.9600,1.0000);transform-origin:center 10.00px;">20</div>
<div style="position:absolute;left:638.62px;top:290.00px;font-size:12px;line-height:12px;color:#fff;white-space:nowrap;transform:scale(0.9600,1.0000);transform-origin:center 10.00px;">21</div>
<div style="position:absolute;left:665.62px;top:290.00px;font-size:12px;line-height:12px;color:#fff;white-space:nowrap;transform:scale(0.9600,1.0000);transform-origin:center 10.00px;">22</div>
<div style="position:absolute;left:691.62px;top:290.00px;font-size:12px;line-height:12px;color:#fff;white-space:nowrap;transform:scale(0.9600,1.0000);transform-origin:center 10.00px;">23</div>
<div style="position:absolute;left:717.62px;top:290.00px;font-size:12px;line-height:12px;color:#fff;white-space:nowrap;transform:scale(0.9600,1.0000);transform-origin:center 10.00px;">24</div>
<div style="position:absolute;left:744.62px;top:290.00px;font-size:12px;line-height:12px;color:#fff;white-space:nowrap;transform:scale(0.9600,1.0000);transform-origin:center 10.00px;">25</div>
<div style="position:absolute;left:770.62px;top:290.00px;font-size:12px;line-height:12px;color:#fff;white-space:nowrap;transform:scale(0.9600,1.0000);transform-origin:center 10.00px;">26</div>
<div style="position:absolute;left:796.62px;top:290.00px;font-size:12px;line-height:12px;color:#fff;white-space:nowrap;transform:scale(0.9600,1.0000);transform-origin:center 10.00px;">27</div>
<div style="position:absolute;left:822.62px;top:290.00px;font-size:12px;line-height:12px;color:#fff;white-space:nowrap;transform:scale(0.9600,1.0000);transform-origin:center 10.00px;">28</div>
<div style="position:absolute;left:518.30px;top:306.00px;font-size:12px;line-height:12px;color:#fff;white-space:nowrap;transform:scale(1.0500,1.0000);transform-origin:left 10.00px;">Transmitted power (dBm)</div>
<div style="position:absolute;left:177.49px;top:163.65px;width:125.09px;height:12.3px;font-size:12.3px;line-height:12.3px;color:#fff;white-space:nowrap;transform:rotate(-90deg) scaleX(1.0073);transform-origin:center center;">Received power (dBm)</div>
<div style="position:absolute;left:848.00px;top:59.50px;font-size:11px;line-height:11px;color:#fff;white-space:nowrap;transform:scale(0.9902,1.0000);transform-origin:left 9.50px;">TI Impinj senkrecht</div>
<svg style="position:absolute;left:972px;top:57px" width="30" height="18"><rect x="0.5" y="0.5" width="28.7" height="16.5" fill="#000" stroke="#b0b0b0"/><polyline points="2.7,10.8 14.3,3.7 26.7,10.8" fill="none" stroke="#ffee22" stroke-width="2"/></svg>
<div style="position:absolute;left:848.00px;top:80.50px;font-size:11px;line-height:11px;color:#fff;white-space:nowrap;transform:scale(0.9902,1.0000);transform-origin:left 9.50px;">TI Impinj senkrecht</div>
<svg style="position:absolute;left:972px;top:78px" width="30" height="18"><rect x="0.5" y="0.5" width="28.7" height="16.5" fill="#000" stroke="#b0b0b0"/><polyline points="2.7,10.8 14.3,3.7 26.7,10.8" fill="none" stroke="#e84a4a" stroke-width="2"/></svg>
<div style="position:absolute;left:848.00px;top:101.50px;font-size:11px;line-height:11px;color:#fff;white-space:nowrap;transform:scale(0.9902,1.0000);transform-origin:left 9.50px;">TI Impinj senkrecht</div>
<svg style="position:absolute;left:972px;top:99px" width="30" height="18"><rect x="0.5" y="0.5" width="28.7" height="16.5" fill="#000" stroke="#b0b0b0"/><polyline points="2.7,10.8 14.3,3.7 26.7,10.8" fill="none" stroke="#22e022" stroke-width="2"/></svg>
<div style="position:absolute;left:848.00px;top:122.50px;font-size:11px;line-height:11px;color:#fff;white-space:nowrap;transform:scale(0.9777,1.0000);transform-origin:left 9.50px;">Raflatac Web senkrec</div>
<svg style="position:absolute;left:972px;top:120px" width="30" height="18"><rect x="0.5" y="0.5" width="28.7" height="16.5" fill="#000" stroke="#b0b0b0"/><polyline points="2.7,10.8 14.3,3.7 26.7,10.8" fill="none" stroke="#46b4ea" stroke-width="2"/></svg>
<div style="position:absolute;left:848.00px;top:143.50px;font-size:11px;line-height:11px;color:#fff;white-space:nowrap;transform:scale(0.9777,1.0000);transform-origin:left 9.50px;">Raflatac Web senkrec</div>
<svg style="position:absolute;left:972px;top:141px" width="30" height="18"><rect x="0.5" y="0.5" width="28.7" height="16.5" fill="#000" stroke="#b0b0b0"/><polyline points="2.7,10.8 14.3,3.7 26.7,10.8" fill="none" stroke="#dcff7a" stroke-width="1.5"/></svg>
<div style="position:absolute;left:848.00px;top:164.50px;font-size:11px;line-height:11px;color:#fff;white-space:nowrap;transform:scale(0.9777,1.0000);transform-origin:left 9.50px;">Raflatac Web senkrec</div>
<svg style="position:absolute;left:972px;top:162px" width="30" height="18"><rect x="0.5" y="0.5" width="28.7" height="16.5" fill="#000" stroke="#b0b0b0"/><polyline points="2.7,10.8 14.3,3.7 26.7,10.8" fill="none" stroke="#c455f5" stroke-width="3"/></svg>
<div style="position:absolute;left:770.9px;top:308px;width:19.6px;height:16.1px;background:linear-gradient(180deg,#7a7a7a,#6e6e6e 50%,#686868);box-shadow:inset 1px 1px 0 #5a5a5a, inset -1px -1px 0 #808080;"></div><div style="position:absolute;left:792.0px;top:308px;width:19.6px;height:16.1px;background:linear-gradient(180deg,#cacaca,#bcbcbc 50%,#adadad);box-shadow:inset 1px 1px 0 #e6e6e6, inset -1px -1px 0 #8a8a8a;"></div><div style="position:absolute;left:813.1px;top:308px;width:19.8px;height:16.1px;background:linear-gradient(180deg,#cacaca,#bcbcbc 50%,#adadad);box-shadow:inset 1px 1px 0 #e6e6e6, inset -1px -1px 0 #8a8a8a;"></div><svg style="position:absolute;left:770.9px;top:308px" width="63" height="17" viewBox="0 0 63 17"><path d="M4 8.500H17M10.400 2V15" stroke="#000" stroke-width="1.100" fill="none"/><circle cx="10.400" cy="8.500" r="1.100" fill="#fff"/><path d="M2.800 4.600H6M4.400 3V6.200" stroke="#4cd84c" stroke-width="1.500"/><rect x="24.1" y="3" width="2.500" height="2.500" fill="#3c7a3c"/><circle cx="33.9" cy="6.500" r="4" fill="#dcdcff" stroke="#000" stroke-width="1.100"/><path d="M31.600 6.500H36.200M33.900 4.200V8.800" stroke="#000" stroke-width="1.100"/><path d="M30.700 9.700L25.900 14.100" stroke="#000" stroke-width="2.300" stroke-linecap="round"/><path d="M29.600 10.700L27 13.100" stroke="#bbb" stroke-width="0.700"/><path d="M33 12.800h4.800l-2.400 2.500z" fill="#000"/><rect x="45.2" y="3" width="2.500" height="2.500" fill="#3c7a3c"/><path d="M48.500 10L47 8q-0.800-1 0.200-1.600q0.900-0.400 1.600 0.500l1.200 1.400V4q0-1 0.900-1q0.900 0 0.900 1V2.900q0-1 1-1q1 0 1 1V3.600q0-0.900 0.900-0.900q0.900 0 0.900 0.900V5.200q0-0.800 0.800-0.800q0.900 0 0.900 0.900V10q0 2-1.200 3.900h-5.200q-1.500-2-2.600-3.900z" fill="#d4d4d4" stroke="#000" stroke-width="0.900"/><path d="M51.800 4.500V8.500M53.800 4V8.500M55.600 5V8.500" stroke="#000" stroke-width="0.800"/></svg>
<div style="position:absolute;left:702px;top:486px;width:19.6px;height:16.1px;background:linear-gradient(180deg,#7a7a7a,#6e6e6e 50%,#686868);box-shadow:inset 1px 1px 0 #5a5a5a, inset -1px -1px 0 #808080;"></div><div style="position:absolute;left:723.1px;top:486px;width:19.6px;height:16.1px;background:linear-gradient(180deg,#cacaca,#bcbcbc 50%,#adadad);box-shadow:inset 1px 1px 0 #e6e6e6, inset -1px -1px 0 #8a8a8a;"></div><div style="position:absolute;left:744.2px;top:486px;width:19.8px;height:16.1px;background:linear-gradient(180deg,#cacaca,#bcbcbc 50%,#adadad);box-shadow:inset 1px 1px 0 #e6e6e6, inset -1px -1px 0 #8a8a8a;"></div><svg style="position:absolute;left:702px;top:486px" width="63" height="17" viewBox="0 0 63 17"><path d="M4 8.500H17M10.400 2V15" stroke="#000" stroke-width="1.100" fill="none"/><circle cx="10.400" cy="8.500" r="1.100" fill="#fff"/><path d="M2.800 4.600H6M4.400 3V6.200" stroke="#4cd84c" stroke-width="1.500"/><rect x="24.1" y="3" width="2.500" height="2.500" fill="#3c7a3c"/><circle cx="33.9" cy="6.500" r="4" fill="#dcdcff" stroke="#000" stroke-width="1.100"/><path d="M31.600 6.500H36.200M33.900 4.200V8.800" stroke="#000" stroke-width="1.100"/><path d="M30.700 9.700L25.900 14.100" stroke="#000" stroke-width="2.300" stroke-linecap="round"/><path d="M29.600 10.700L27 13.100" stroke="#bbb" stroke-width="0.700"/><path d="M33 12.800h4.800l-2.400 2.500z" fill="#000"/><rect x="45.2" y="3" width="2.500" height="2.500" fill="#3c7a3c"/><path d="M48.500 10L47 8q-0.800-1 0.200-1.600q0.900-0.400 1.600 0.500l1.200 1.400V4q0-1 0.900-1q0.900 0 0.900 1V2.900q0-1 1-1q1 0 1 1V3.600q0-0.900 0.900-0.900q0.900 0 0.900 0.900V5.200q0-0.800 0.800-0.800q0.900 0 0.900 0.900V10q0 2-1.200 3.900h-5.200q-1.500-2-2.600-3.900z" fill="#d4d4d4" stroke="#000" stroke-width="0.900"/><path d="M51.800 4.500V8.500M53.800 4V8.500M55.600 5V8.500" stroke="#000" stroke-width="0.800"/></svg>
<div style="position:absolute;left:231.30px;top:326.70px;font-size:15.6px;line-height:15.6px;color:#fff;white-space:nowrap;transform:rotate(0.03deg) scale(0.8529,1.0000);transform-origin:left 13.30px;">LATEST RESPONSE</div>
<div style="position:absolute;left:260.31px;top:351.00px;font-size:12px;line-height:12px;color:#fff;white-space:nowrap;">0,5</div>
<div style="position:absolute;left:256.32px;top:455.00px;font-size:12px;line-height:12px;color:#fff;white-space:nowrap;">-0,5</div>
<div style="position:absolute;left:282.56px;top:470.00px;font-size:12px;line-height:12px;color:#fff;white-space:nowrap;">0</div>
<div style="position:absolute;left:332.55px;top:470.00px;font-size:12px;line-height:12px;color:#fff;white-space:nowrap;">100u</div>
<div style="position:absolute;left:391.55px;top:470.00px;font-size:12px;line-height:12px;color:#fff;white-space:nowrap;">200u</div>
<div style="position:absolute;left:451.55px;top:470.00px;font-size:12px;line-height:12px;color:#fff;white-space:nowrap;">300u</div>
<div style="position:absolute;left:510.55px;top:470.00px;font-size:12px;line-height:12px;color:#fff;white-space:nowrap;">400u</div>
<div style="position:absolute;left:570.55px;top:470.00px;font-size:12px;line-height:12px;color:#fff;white-space:nowrap;">500u</div>
<div style="position:absolute;left:629.55px;top:470.00px;font-size:12px;line-height:12px;color:#fff;white-space:nowrap;">600u</div>
<div style="position:absolute;left:689.55px;top:470.00px;font-size:12px;line-height:12px;color:#fff;white-space:nowrap;">700u</div>
<div style="position:absolute;left:749.55px;top:470.00px;font-size:12px;line-height:12px;color:#fff;white-space:nowrap;">800u</div>
<div style="position:absolute;left:502.22px;top:485.00px;font-size:12px;line-height:12px;color:#fff;white-space:nowrap;transform:scale(1.0400,1.0000);transform-origin:center 10.00px;">Time (s)</div>
<div style="position:absolute;left:214.61px;top:403.05px;width:60.85px;height:12.3px;font-size:12.3px;line-height:12.3px;color:#fff;white-space:nowrap;transform:rotate(-90deg) scaleX(1.0189);transform-origin:center center;">Voltage (V)</div>
<div style="position:absolute;left:850.30px;top:328.70px;font-size:15.6px;line-height:15.6px;color:#fff;white-space:nowrap;transform:rotate(0.03deg) scale(0.9216,1.0000);transform-origin:left 13.30px;">NUMERIC DATA</div>
<div style="position:absolute;left:808.30px;top:361.00px;font-size:13px;line-height:13px;color:#fff;white-space:nowrap;transform:scale(0.9802,1.0000);transform-origin:left 11.00px;">Power out (dBm)</div>
<svg style="position:absolute;left:920.80px;top:357.50px" width="62.20" height="23.30" viewBox="0 0 62.20 23.30"><path d="M0.00 23.30L62.20 23.30L62.20 0.00L58.40 3.70L58.40 19.50L4.20 19.50Z" fill="#3d3d3d"/><path d="M0.00 0.00L62.20 0.00L58.40 3.70L4.20 3.70L4.20 19.50L0.00 23.30Z" fill="#0c0c0c"/><rect x="4.20" y="3.70" width="54.20" height="15.80" fill="#d8d8d8"/></svg><div style="position:absolute;left:944.50px;top:364.00px;font-size:12px;line-height:12px;color:#000;white-space:nowrap;transform:scale(0.9362,1.0000);transform-origin:left 10.00px;">27</div>
<div style="position:absolute;left:808.30px;top:389.00px;font-size:13px;line-height:13px;color:#fff;white-space:nowrap;transform:scale(0.9545,1.0000);transform-origin:left 11.00px;">Power in (dBm)</div>
<svg style="position:absolute;left:920.80px;top:385.80px" width="62.20" height="22.90" viewBox="0 0 62.20 22.90"><path d="M0.00 22.90L62.20 22.90L62.20 0.00L57.50 3.40L57.50 19.20L4.20 19.20Z" fill="#3d3d3d"/><path d="M0.00 0.00L62.20 0.00L57.50 3.40L4.20 3.40L4.20 19.20L0.00 22.90Z" fill="#0c0c0c"/><rect x="4.20" y="3.40" width="53.30" height="15.80" fill="#d8d8d8"/></svg><div style="position:absolute;left:936.30px;top:392.00px;font-size:12px;line-height:12px;color:#000;white-space:nowrap;transform:scale(1.0380,1.0000);transform-origin:left 10.00px;">-83,3</div>
<div style="position:absolute;left:808.30px;top:417.00px;font-size:13px;line-height:13px;color:#fff;white-space:nowrap;transform:scale(0.9418,1.0000);transform-origin:left 11.00px;">Phase (deg)</div>
<svg style="position:absolute;left:920.80px;top:415.00px" width="62.20" height="22.50" viewBox="0 0 62.20 22.50"><path d="M0.00 22.50L62.20 22.50L62.20 0.00L58.20 3.30L58.20 18.80L4.20 18.80Z" fill="#3d3d3d"/><path d="M0.00 0.00L62.20 0.00L58.20 3.30L4.20 3.30L4.20 18.80L0.00 22.50Z" fill="#0c0c0c"/><rect x="4.20" y="3.30" width="54.00" height="15.50" fill="#d8d8d8"/></svg><div style="position:absolute;left:933.00px;top:421.00px;font-size:12px;line-height:12px;color:#000;white-space:nowrap;transform:scale(1.0636,1.0000);transform-origin:left 10.00px;">-147,8</div>
<svg style="position:absolute;left:15.80px;top:541.30px" width="178.40" height="102.70" viewBox="0 0 178.40 102.70"><path d="M0.00 102.70L178.40 102.70L178.40 0.00L176.30 1.85L176.30 100.30L2.10 100.30Z" fill="#d6d6d6"/><path d="M0.00 0.00L178.40 0.00L176.30 1.85L2.10 1.85L2.10 100.30L0.00 102.70Z" fill="#b2b2b2"/><path d="M2.10 100.30L176.30 100.30L176.30 1.85L174.20 3.70L174.20 97.90L4.20 97.90Z" fill="#e1e1e1"/><path d="M2.10 1.85L176.30 1.85L174.20 3.70L4.20 3.70L4.20 97.90L2.10 100.30Z" fill="#888888"/><rect x="4.20" y="3.70" width="170.00" height="94.20" fill="#fff"/></svg>
<div style="position:absolute;left:174.2px;top:545px;width:15.8px;height:94.2px;background:#b4b4b4;"></div><div style="position:absolute;left:174.2px;top:545px;width:15.8px;height:15.5px;background:#bdbdbd;box-shadow:inset 1px 1px 0 #e6e6e6,inset -1px -1px 0 #747474;"></div><svg style="position:absolute;left:178.1px;top:548.75px" width="8" height="8"><path d="M0.5 7L4 0.5L7.5 7Z" fill="#707070"/></svg><div style="position:absolute;left:174.2px;top:623.7px;width:15.8px;height:15.5px;background:#bdbdbd;box-shadow:inset 1px 1px 0 #e6e6e6,inset -1px -1px 0 #747474;"></div><svg style="position:absolute;left:178.1px;top:627.45px" width="8" height="8"><path d="M0.5 0.5L7.5 0.5L4 7Z" fill="#707070"/></svg>
<div style="position:absolute;left:26.1px;top:653.1px;width:31.8px;height:29.6px;background:#2c2c2c;"></div><svg style="position:absolute;left:26.1px;top:653.1px" width="31.80" height="29.60" viewBox="0 0 31.80 29.60"><defs><linearGradient id="bf1" x1="0" y1="0" x2="1" y2="0.25"><stop offset="0" stop-color="#cdcdcd"/><stop offset="0.55" stop-color="#bcbcbc"/><stop offset="1" stop-color="#9c9c9c"/></linearGradient></defs><rect x="1" y="1" width="29.80" height="27.60" fill="url(#bf1)"/><defs><linearGradient id="bt1" x1="0" y1="0" x2="0" y2="1"><stop offset="0" stop-color="#e2e2e2"/><stop offset="1" stop-color="#cdcdcd"/></linearGradient><linearGradient id="bl1" x1="0" y1="0" x2="1" y2="0"><stop offset="0" stop-color="#d8d8d8"/><stop offset="1" stop-color="#c6c6c6"/></linearGradient><linearGradient id="br1" x1="0" y1="0" x2="1" y2="0"><stop offset="0" stop-color="#8e8e8e"/><stop offset="1" stop-color="#626262"/></linearGradient><linearGradient id="bb1" x1="0" y1="0" x2="0" y2="1"><stop offset="0" stop-color="#a0a0a0"/><stop offset="1" stop-color="#727272"/></linearGradient></defs><path d="M1 1H30.80L27.30 4.500H4.500Z" fill="url(#bt1)"/><path d="M1 1V28.60L4.500 25.10V4.500Z" fill="url(#bl1)"/><path d="M30.80 1V28.60L27.30 25.10V4.500Z" fill="url(#br1)"/><path d="M1 28.60H30.80L27.30 25.10H4.500Z" fill="url(#bb1)"/></svg><svg style="position:absolute;left:26.1px;top:653.1px" width="31.80" height="29.60" viewBox="0 0 31.80 29.60"><defs><linearGradient id="gp" x1="0" y1="0" x2="0" y2="1"><stop offset="0" stop-color="#3652b6"/><stop offset="1" stop-color="#98a6da"/></linearGradient></defs><rect x="4.200" y="3.300" width="23.5" height="24.4" rx="6.500" fill="#1c2488"/><rect x="5.600" y="4.400" width="20.4" height="20.8" rx="5" fill="url(#gp)" stroke="#f0f3ff" stroke-width="1.500"/><path d="M13.400 7.500h5v5.200h4.700v5.100h-4.700v5.500h-5v-5.500h-5v-5.100h5z" fill="#fff"/></svg>
<div style="position:absolute;left:66.1px;top:653.1px;width:31.8px;height:29.6px;background:#2c2c2c;"></div><svg style="position:absolute;left:66.1px;top:653.1px" width="31.80" height="29.60" viewBox="0 0 31.80 29.60"><defs><linearGradient id="bf2" x1="0" y1="0" x2="1" y2="0.25"><stop offset="0" stop-color="#cdcdcd"/><stop offset="0.55" stop-color="#bcbcbc"/><stop offset="1" stop-color="#9c9c9c"/></linearGradient></defs><rect x="1" y="1" width="29.80" height="27.60" fill="url(#bf2)"/><defs><linearGradient id="bt2" x1="0" y1="0" x2="0" y2="1"><stop offset="0" stop-color="#e2e2e2"/><stop offset="1" stop-color="#cdcdcd"/></linearGradient><linearGradient id="bl2" x1="0" y1="0" x2="1" y2="0"><stop offset="0" stop-color="#d8d8d8"/><stop offset="1" stop-color="#c6c6c6"/></linearGradient><linearGradient id="br2" x1="0" y1="0" x2="1" y2="0"><stop offset="0" stop-color="#8e8e8e"/><stop offset="1" stop-color="#626262"/></linearGradient><linearGradient id="bb2" x1="0" y1="0" x2="0" y2="1"><stop offset="0" stop-color="#a0a0a0"/><stop offset="1" stop-color="#727272"/></linearGradient></defs><path d="M1 1H30.80L27.30 4.500H4.500Z" fill="url(#bt2)"/><path d="M1 1V28.60L4.500 25.10V4.500Z" fill="url(#bl2)"/><path d="M30.80 1V28.60L27.30 25.10V4.500Z" fill="url(#br2)"/><path d="M1 28.60H30.80L27.30 25.10H4.500Z" fill="url(#bb2)"/></svg><svg style="position:absolute;left:66.1px;top:653.1px" width="31.80" height="29.60" viewBox="0 0 31.80 29.60"><rect x="3" y="3.500" width="24" height="14" fill="#c6c6c6" opacity="0.7"/><rect x="4" y="4.300" width="16.5" height="1.200" fill="#777"/><rect x="3" y="6.500" width="23.6" height="1.300" fill="#8fa8dc"/><rect x="3" y="8.600" width="23.6" height="1.500" fill="#6f96e6"/><rect x="3" y="11" width="6" height="1.200" fill="#999"/><rect x="3" y="14.200" width="6" height="1.200" fill="#999"/><rect x="11.2" y="13" width="15" height="14.6" rx="3.500" fill="#a83a3a"/><rect x="10.900" y="11.700" width="14.500" height="14.300" rx="3.200" fill="#c05050" stroke="#f6d4d4" stroke-width="1.200"/><path d="M14.200 14.800l7.400 8M21.600 14.800l-7.400 8" stroke="#fff" stroke-width="2"/></svg>
<div style="position:absolute;left:145px;top:653.1px;width:31.8px;height:29.6px;background:#2c2c2c;"></div><svg style="position:absolute;left:145px;top:653.1px" width="31.80" height="29.60" viewBox="0 0 31.80 29.60"><defs><linearGradient id="bf3" x1="0" y1="0" x2="1" y2="0.25"><stop offset="0" stop-color="#cdcdcd"/><stop offset="0.55" stop-color="#bcbcbc"/><stop offset="1" stop-color="#9c9c9c"/></linearGradient></defs><rect x="1" y="1" width="29.80" height="27.60" fill="url(#bf3)"/><defs><linearGradient id="bt3" x1="0" y1="0" x2="0" y2="1"><stop offset="0" stop-color="#e2e2e2"/><stop offset="1" stop-color="#cdcdcd"/></linearGradient><linearGradient id="bl3" x1="0" y1="0" x2="1" y2="0"><stop offset="0" stop-color="#d8d8d8"/><stop offset="1" stop-color="#c6c6c6"/></linearGradient><linearGradient id="br3" x1="0" y1="0" x2="1" y2="0"><stop offset="0" stop-color="#8e8e8e"/><stop offset="1" stop-color="#626262"/></linearGradient><linearGradient id="bb3" x1="0" y1="0" x2="0" y2="1"><stop offset="0" stop-color="#a0a0a0"/><stop offset="1" stop-color="#727272"/></linearGradient></defs><path d="M1 1H30.80L27.30 4.500H4.500Z" fill="url(#bt3)"/><path d="M1 1V28.60L4.500 25.10V4.500Z" fill="url(#bl3)"/><path d="M30.80 1V28.60L27.30 25.10V4.500Z" fill="url(#br3)"/><path d="M1 28.60H30.80L27.30 25.10H4.500Z" fill="url(#bb3)"/></svg><svg style="position:absolute;left:145px;top:653.1px" width="31.80" height="29.60" viewBox="0 0 31.80 29.60"><defs><linearGradient id="gf" x1="0" y1="0" x2="0" y2="1"><stop offset="0" stop-color="#a4c0e8"/><stop offset="0.6" stop-color="#bcd2f0"/><stop offset="1" stop-color="#9fbce6"/></linearGradient><linearGradient id="gpp" x1="0" y1="0" x2="1" y2="0"><stop offset="0" stop-color="#cfe0f8"/><stop offset="0.5" stop-color="#fff"/><stop offset="1" stop-color="#e4eefc"/></linearGradient></defs><path d="M5.800 7q0-2 2-2h6.500q1.500 0 2 2.100h7.700q2 0 2 2v6h-20.200z" fill="#4a82c6"/><rect x="9.100" y="9.500" width="13" height="5" fill="url(#gpp)"/><path d="M4.200 13.400h23l-0.600 11q0 0.900-1 0.900h-19.800q-1 0-1-0.900z" fill="url(#gf)"/></svg>
<div style="position:absolute;left:106.1px;top:653.1px;width:31.8px;height:29.6px;background:#2c2c2c;"></div><svg style="position:absolute;left:106.1px;top:653.1px" width="31.80" height="29.60" viewBox="0 0 31.80 29.60"><defs><linearGradient id="bf4" x1="0" y1="0" x2="1" y2="0.25"><stop offset="0" stop-color="#cdcdcd"/><stop offset="0.55" stop-color="#bcbcbc"/><stop offset="1" stop-color="#9c9c9c"/></linearGradient></defs><rect x="1" y="1" width="29.80" height="27.60" fill="url(#bf4)"/><defs><linearGradient id="bt4" x1="0" y1="0" x2="0" y2="1"><stop offset="0" stop-color="#e2e2e2"/><stop offset="1" stop-color="#cdcdcd"/></linearGradient><linearGradient id="bl4" x1="0" y1="0" x2="1" y2="0"><stop offset="0" stop-color="#d8d8d8"/><stop offset="1" stop-color="#c6c6c6"/></linearGradient><linearGradient id="br4" x1="0" y1="0" x2="1" y2="0"><stop offset="0" stop-color="#8e8e8e"/><stop offset="1" stop-color="#626262"/></linearGradient><linearGradient id="bb4" x1="0" y1="0" x2="0" y2="1"><stop offset="0" stop-color="#a0a0a0"/><stop offset="1" stop-color="#727272"/></linearGradient></defs><path d="M1 1H30.80L27.30 4.500H4.500Z" fill="url(#bt4)"/><path d="M1 1V28.60L4.500 25.10V4.500Z" fill="url(#bl4)"/><path d="M30.80 1V28.60L27.30 25.10V4.500Z" fill="url(#br4)"/><path d="M1 28.60H30.80L27.30 25.10H4.500Z" fill="url(#bb4)"/></svg><svg style="position:absolute;left:106.1px;top:653.1px" width="31.80" height="29.60" viewBox="0 0 31.80 29.60"><path d="M6.600 8.700q0-2 2-2h15q2 0 2 2v9h-19z" fill="#4a82c6"/><path d="M14 8q7-1.500 9.100 3.500v5.500h-9.100z" fill="#eef4fe"/><path d="M5.400 16h21.300l-0.500 8q0 0.900-1 0.900h-18.300q-1 0-1-0.900z" fill="url(#gf)"/><path d="M8.900 4h5.500v7.500h2.400l-4.900 6.900-5-6.900h2z" fill="#f01010"/></svg>
<svg style="position:absolute;left:230.20px;top:540.50px" width="338.70" height="108.80" viewBox="0 0 338.70 108.80"><path d="M0.00 108.80L338.70 108.80L338.70 0.00L336.70 1.85L336.70 106.15L1.90 106.15Z" fill="#d6d6d6"/><path d="M0.00 0.00L338.70 0.00L336.70 1.85L1.90 1.85L1.90 106.15L0.00 108.80Z" fill="#b2b2b2"/><path d="M1.90 106.15L336.70 106.15L336.70 1.85L334.70 3.70L334.70 103.50L3.80 103.50Z" fill="#e1e1e1"/><path d="M1.90 1.85L336.70 1.85L334.70 3.70L3.80 3.70L3.80 103.50L1.90 106.15Z" fill="#888888"/><rect x="3.80" y="3.70" width="330.90" height="99.80" fill="#fff"/></svg>
<div style="position:absolute;left:234px;top:629px;width:315.2px;height:15px;background:#f7911e;"></div>
<div style="position:absolute;left:239.50px;top:546.00px;font-size:13px;line-height:13px;color:#000;white-space:nowrap;">BS, 14:06, TI Impinj senkrecht 1</div>
<div style="position:absolute;left:239.50px;top:563.00px;font-size:13px;line-height:13px;color:#000;white-space:nowrap;">BS, 14:07, TI Impinj senkrecht 2</div>
<div style="position:absolute;left:239.50px;top:580.00px;font-size:13px;line-height:13px;color:#000;white-space:nowrap;">BS, 14:07, TI Impinj senkrecht 3</div>
<div style="position:absolute;left:239.50px;top:597.00px;font-size:13px;line-height:13px;color:#000;white-space:nowrap;transform:scale(0.9791,1.0000);transform-origin:left 11.00px;">BS, 14:17, Raflatac Web senkrecht 1</div>
<div style="position:absolute;left:239.50px;top:614.00px;font-size:13px;line-height:13px;color:#000;white-space:nowrap;transform:scale(0.9791,1.0000);transform-origin:left 11.00px;">BS, 14:18, Raflatac Web senkrecht 2</div>
<div style="position:absolute;left:239.50px;top:631.00px;font-size:13px;line-height:13px;color:#000;white-space:nowrap;transform:scale(0.9791,1.0000);transform-origin:left 11.00px;">BS, 14:20, Raflatac Web senkrecht 3</div>
<div style="position:absolute;left:549.2px;top:544.2px;width:15.7px;height:99.8px;background:#b4b4b4;"></div><div style="position:absolute;left:549.2px;top:544.2px;width:15.7px;height:15.5px;background:#bdbdbd;box-shadow:inset 1px 1px 0 #e6e6e6,inset -1px -1px 0 #747474;"></div><svg style="position:absolute;left:553.0500000000001px;top:547.95px" width="8" height="8"><path d="M0.5 7L4 0.5L7.5 7Z" fill="#000"/></svg><div style="position:absolute;left:549.2px;top:628.5px;width:15.7px;height:15.5px;background:#bdbdbd;box-shadow:inset 1px 1px 0 #e6e6e6,inset -1px -1px 0 #747474;"></div><svg style="position:absolute;left:553.0500000000001px;top:632.25px" width="8" height="8"><path d="M0.5 0.5L7.5 0.5L4 7Z" fill="#000"/></svg><div style="position:absolute;left:549.2px;top:583.2px;width:15.7px;height:36.19999999999993px;background:linear-gradient(90deg,#a4a4a4,#cecece 28%,#c4c4c4 50%,#9a9a9a 80%,#7c7c7c);border-radius:50%/3px;"></div>
<div style="position:absolute;left:549.2px;top:559.7px;width:15.7px;height:23.5px;background:#c4c4c4;box-shadow:inset 1px 0 0 #9c9c9c;"></div>
<div style="position:absolute;left:549.2px;top:619.4px;width:15.7px;height:9.1px;background:#b6b6b6;box-shadow:inset 1px 0 0 #9c9c9c;"></div>
<div style="position:absolute;left:231.1px;top:653.1px;width:31.7px;height:29.6px;background:#2c2c2c;"></div><svg style="position:absolute;left:231.1px;top:653.1px" width="31.70" height="29.60" viewBox="0 0 31.70 29.60"><defs><linearGradient id="bf5" x1="0" y1="0" x2="1" y2="0.25"><stop offset="0" stop-color="#cdcdcd"/><stop offset="0.55" stop-color="#bcbcbc"/><stop offset="1" stop-color="#9c9c9c"/></linearGradient></defs><rect x="1" y="1" width="29.70" height="27.60" fill="url(#bf5)"/><defs><linearGradient id="bt5" x1="0" y1="0" x2="0" y2="1"><stop offset="0" stop-color="#e2e2e2"/><stop offset="1" stop-color="#cdcdcd"/></linearGradient><linearGradient id="bl5" x1="0" y1="0" x2="1" y2="0"><stop offset="0" stop-color="#d8d8d8"/><stop offset="1" stop-color="#c6c6c6"/></linearGradient><linearGradient id="br5" x1="0" y1="0" x2="1" y2="0"><stop offset="0" stop-color="#8e8e8e"/><stop offset="1" stop-color="#626262"/></linearGradient><linearGradient id="bb5" x1="0" y1="0" x2="0" y2="1"><stop offset="0" stop-color="#a0a0a0"/><stop offset="1" stop-color="#727272"/></linearGradient></defs><path d="M1 1H30.70L27.20 4.500H4.500Z" fill="url(#bt5)"/><path d="M1 1V28.60L4.500 25.10V4.500Z" fill="url(#bl5)"/><path d="M30.70 1V28.60L27.20 25.10V4.500Z" fill="url(#br5)"/><path d="M1 28.60H30.70L27.20 25.10H4.500Z" fill="url(#bb5)"/></svg><svg style="position:absolute;left:231.1px;top:653.1px" width="31.70" height="29.60" viewBox="0 0 31.70 29.60"><rect x="3" y="3.500" width="24" height="14" fill="#c6c6c6" opacity="0.7"/><rect x="4" y="4.300" width="16.5" height="1.200" fill="#777"/><rect x="3" y="6.500" width="23.6" height="1.300" fill="#8fa8dc"/><rect x="3" y="8.600" width="23.6" height="1.500" fill="#6f96e6"/><rect x="3" y="11" width="6" height="1.200" fill="#999"/><rect x="3" y="14.200" width="6" height="1.200" fill="#999"/><rect x="11.2" y="13" width="15" height="14.6" rx="3.500" fill="#a83a3a"/><rect x="10.900" y="11.700" width="14.500" height="14.300" rx="3.200" fill="#c05050" stroke="#f6d4d4" stroke-width="1.200"/><path d="M14.200 14.800l7.400 8M21.600 14.800l-7.400 8" stroke="#fff" stroke-width="2"/></svg>
<div style="position:absolute;left:270px;top:653.1px;width:31.7px;height:29.6px;background:#2c2c2c;"></div><svg style="position:absolute;left:270px;top:653.1px" width="31.70" height="29.60" viewBox="0 0 31.70 29.60"><defs><linearGradient id="bf6" x1="0" y1="0" x2="1" y2="0.25"><stop offset="0" stop-color="#cdcdcd"/><stop offset="0.55" stop-color="#bcbcbc"/><stop offset="1" stop-color="#9c9c9c"/></linearGradient></defs><rect x="1" y="1" width="29.70" height="27.60" fill="url(#bf6)"/><defs><linearGradient id="bt6" x1="0" y1="0" x2="0" y2="1"><stop offset="0" stop-color="#e2e2e2"/><stop offset="1" stop-color="#cdcdcd"/></linearGradient><linearGradient id="bl6" x1="0" y1="0" x2="1" y2="0"><stop offset="0" stop-color="#d8d8d8"/><stop offset="1" stop-color="#c6c6c6"/></linearGradient><linearGradient id="br6" x1="0" y1="0" x2="1" y2="0"><stop offset="0" stop-color="#8e8e8e"/><stop offset="1" stop-color="#626262"/></linearGradient><linearGradient id="bb6" x1="0" y1="0" x2="0" y2="1"><stop offset="0" stop-color="#a0a0a0"/><stop offset="1" stop-color="#727272"/></linearGradient></defs><path d="M1 1H30.70L27.20 4.500H4.500Z" fill="url(#bt6)"/><path d="M1 1V28.60L4.500 25.10V4.500Z" fill="url(#bl6)"/><path d="M30.70 1V28.60L27.20 25.10V4.500Z" fill="url(#br6)"/><path d="M1 28.60H30.70L27.20 25.10H4.500Z" fill="url(#bb6)"/></svg><svg style="position:absolute;left:270px;top:653.1px" width="31.70" height="29.60" viewBox="0 0 31.70 29.60"><path d="M6.600 8.700q0-2 2-2h15q2 0 2 2v9h-19z" fill="#4a82c6"/><path d="M14 8q7-1.500 9.100 3.500v5.500h-9.100z" fill="#eef4fe"/><path d="M5.400 16h21.300l-0.500 8q0 0.900-1 0.900h-18.300q-1 0-1-0.900z" fill="url(#gf)"/><path d="M8.900 4h5.500v7.500h2.400l-4.900 6.900-5-6.900h2z" fill="#f01010"/></svg>
<div style="position:absolute;left:310.1px;top:653.1px;width:31.7px;height:29.6px;background:#2c2c2c;"></div><svg style="position:absolute;left:310.1px;top:653.1px" width="31.70" height="29.60" viewBox="0 0 31.70 29.60"><defs><linearGradient id="bf7" x1="0" y1="0" x2="1" y2="0.25"><stop offset="0" stop-color="#cdcdcd"/><stop offset="0.55" stop-color="#bcbcbc"/><stop offset="1" stop-color="#9c9c9c"/></linearGradient></defs><rect x="1" y="1" width="29.70" height="27.60" fill="url(#bf7)"/><defs><linearGradient id="bt7" x1="0" y1="0" x2="0" y2="1"><stop offset="0" stop-color="#e2e2e2"/><stop offset="1" stop-color="#cdcdcd"/></linearGradient><linearGradient id="bl7" x1="0" y1="0" x2="1" y2="0"><stop offset="0" stop-color="#d8d8d8"/><stop offset="1" stop-color="#c6c6c6"/></linearGradient><linearGradient id="br7" x1="0" y1="0" x2="1" y2="0"><stop offset="0" stop-color="#8e8e8e"/><stop offset="1" stop-color="#626262"/></linearGradient><linearGradient id="bb7" x1="0" y1="0" x2="0" y2="1"><stop offset="0" stop-color="#a0a0a0"/><stop offset="1" stop-color="#727272"/></linearGradient></defs><path d="M1 1H30.70L27.20 4.500H4.500Z" fill="url(#bt7)"/><path d="M1 1V28.60L4.500 25.10V4.500Z" fill="url(#bl7)"/><path d="M30.70 1V28.60L27.20 25.10V4.500Z" fill="url(#br7)"/><path d="M1 28.60H30.70L27.20 25.10H4.500Z" fill="url(#bb7)"/></svg><svg style="position:absolute;left:310.1px;top:653.1px" width="31.70" height="29.60" viewBox="0 0 31.70 29.60"><defs><linearGradient id="gf" x1="0" y1="0" x2="0" y2="1"><stop offset="0" stop-color="#a4c0e8"/><stop offset="0.6" stop-color="#bcd2f0"/><stop offset="1" stop-color="#9fbce6"/></linearGradient><linearGradient id="gpp" x1="0" y1="0" x2="1" y2="0"><stop offset="0" stop-color="#cfe0f8"/><stop offset="0.5" stop-color="#fff"/><stop offset="1" stop-color="#e4eefc"/></linearGradient></defs><path d="M5.800 7q0-2 2-2h6.500q1.500 0 2 2.100h7.700q2 0 2 2v6h-20.200z" fill="#4a82c6"/><rect x="9.100" y="9.500" width="13" height="5" fill="url(#gpp)"/><path d="M4.200 13.400h23l-0.600 11q0 0.900-1 0.900h-19.800q-1 0-1-0.900z" fill="url(#gf)"/></svg>
<div style="position:absolute;left:595.30px;top:545.50px;font-size:11px;line-height:11px;color:#000;white-space:nowrap;transform:scale(0.9519,1.0000);transform-origin:left 9.50px;">Type</div>
<svg style="position:absolute;left:622.50px;top:540.80px" width="146.20" height="22.90" viewBox="0 0 146.20 22.90"><path d="M0.00 22.90L146.20 22.90L146.20 0.00L144.75 1.70L144.75 21.30L1.65 21.30Z" fill="#d6d6d6"/><path d="M0.00 0.00L146.20 0.00L144.75 1.70L1.65 1.70L1.65 21.30L0.00 22.90Z" fill="#bababa"/><path d="M1.65 21.30L144.75 21.30L144.75 1.70L143.30 3.40L143.30 19.70L3.30 19.70Z" fill="#e1e1e1"/><path d="M1.65 1.70L144.75 1.70L143.30 3.40L3.30 3.40L3.30 19.70L1.65 21.30Z" fill="#969696"/><rect x="3.30" y="3.40" width="140.00" height="16.30" fill="#cdcdcd"/></svg>
<div style="position:absolute;left:627.50px;top:546.50px;font-size:11px;line-height:11px;color:#000;white-space:nowrap;transform:scale(0.9749,1.0000);transform-origin:left 9.50px;">Backscatter sweep</div>
<div style="position:absolute;left:597.20px;top:572.50px;font-size:11px;line-height:11px;color:#000;white-space:nowrap;transform:scale(0.8653,1.0000);transform-origin:left 9.50px;">Time</div>
<svg style="position:absolute;left:622.50px;top:567.80px" width="50.30" height="23.50" viewBox="0 0 50.30 23.50"><path d="M0.00 23.50L50.30 23.50L50.30 0.00L48.90 1.70L48.90 21.85L1.65 21.85Z" fill="#d6d6d6"/><path d="M0.00 0.00L50.30 0.00L48.90 1.70L1.65 1.70L1.65 21.85L0.00 23.50Z" fill="#bababa"/><path d="M1.65 21.85L48.90 21.85L48.90 1.70L47.50 3.40L47.50 20.20L3.30 20.20Z" fill="#e1e1e1"/><path d="M1.65 1.70L48.90 1.70L47.50 3.40L3.30 3.40L3.30 20.20L1.65 21.85Z" fill="#969696"/><rect x="3.30" y="3.40" width="44.20" height="16.80" fill="#cdcdcd"/></svg>
<div style="position:absolute;left:633.70px;top:573.50px;font-size:11px;line-height:11px;color:#000;white-space:nowrap;transform:scale(0.9664,1.0000);transform-origin:left 9.50px;">14:20</div>
<div style="position:absolute;left:688px;top:572px;width:12.8px;height:12.7px;background:#fff;border:1px solid #1c4a7c;box-sizing:border-box !important;"></div>
<svg style="position:absolute;left:688px;top:572px" width="13" height="13"><path d="M3 6.300L5.400 9L10 3.400" fill="none" stroke="#21a121" stroke-width="1.900"/></svg>
<div style="position:absolute;left:702.80px;top:572.50px;font-size:11px;line-height:11px;color:#000;white-space:nowrap;transform:scale(0.9608,1.0000);transform-origin:left 9.50px;">Show graph</div>
<div style="position:absolute;left:594.20px;top:594.50px;font-size:11px;line-height:11px;color:#000;white-space:nowrap;transform:scale(0.9233,1.0000);transform-origin:left 9.50px;">Comments</div>
<div style="position:absolute;left:594.2px;top:609.5px;width:174.5px;height:35.2px;background:#fff;border:1px solid #7f9db9;box-sizing:border-box !important;"></div>
<div style="position:absolute;left:597.50px;top:612.50px;font-size:11px;line-height:11px;color:#000;white-space:nowrap;transform:scale(0.9878,1.0000);transform-origin:left 9.50px;">Raflatac Web senkrecht 3</div>
<div style="position:absolute;left:595.1px;top:653.1px;width:29.8px;height:29.6px;background:#2c2c2c;"></div><svg style="position:absolute;left:595.1px;top:653.1px" width="29.80" height="29.60" viewBox="0 0 29.80 29.60"><defs><linearGradient id="bf8" x1="0" y1="0" x2="1" y2="0.25"><stop offset="0" stop-color="#cdcdcd"/><stop offset="0.55" stop-color="#bcbcbc"/><stop offset="1" stop-color="#9c9c9c"/></linearGradient></defs><rect x="1" y="1" width="27.80" height="27.60" fill="url(#bf8)"/><defs><linearGradient id="bt8" x1="0" y1="0" x2="0" y2="1"><stop offset="0" stop-color="#e2e2e2"/><stop offset="1" stop-color="#cdcdcd"/></linearGradient><linearGradient id="bl8" x1="0" y1="0" x2="1" y2="0"><stop offset="0" stop-color="#d8d8d8"/><stop offset="1" stop-color="#c6c6c6"/></linearGradient><linearGradient id="br8" x1="0" y1="0" x2="1" y2="0"><stop offset="0" stop-color="#8e8e8e"/><stop offset="1" stop-color="#626262"/></linearGradient><linearGradient id="bb8" x1="0" y1="0" x2="0" y2="1"><stop offset="0" stop-color="#a0a0a0"/><stop offset="1" stop-color="#727272"/></linearGradient></defs><path d="M1 1H28.80L25.30 4.500H4.500Z" fill="url(#bt8)"/><path d="M1 1V28.60L4.500 25.10V4.500Z" fill="url(#bl8)"/><path d="M28.80 1V28.60L25.30 25.10V4.500Z" fill="url(#br8)"/><path d="M1 28.60H28.80L25.30 25.10H4.500Z" fill="url(#bb8)"/></svg><svg style="position:absolute;left:595.1px;top:653.1px" width="29.80" height="29.60" viewBox="0 0 29.80 29.60"><defs><linearGradient id="gd" x1="0" y1="0" x2="0" y2="1"><stop offset="0" stop-color="#8ea6ea"/><stop offset="0.5" stop-color="#3050f0"/><stop offset="1" stop-color="#0010f0"/></linearGradient></defs><path d="M10.300 5.200h8.300v12.200h4.300l-8.500 9.300-8.500-9.300h4.400z" fill="url(#gd)"/></svg>
<div style="position:absolute;left:633px;top:653.1px;width:31.8px;height:29.6px;background:#2c2c2c;"></div><svg style="position:absolute;left:633px;top:653.1px" width="31.80" height="29.60" viewBox="0 0 31.80 29.60"><defs><linearGradient id="bf9" x1="0" y1="0" x2="1" y2="0.25"><stop offset="0" stop-color="#cdcdcd"/><stop offset="0.55" stop-color="#bcbcbc"/><stop offset="1" stop-color="#9c9c9c"/></linearGradient></defs><rect x="1" y="1" width="29.80" height="27.60" fill="url(#bf9)"/><defs><linearGradient id="bt9" x1="0" y1="0" x2="0" y2="1"><stop offset="0" stop-color="#e2e2e2"/><stop offset="1" stop-color="#cdcdcd"/></linearGradient><linearGradient id="bl9" x1="0" y1="0" x2="1" y2="0"><stop offset="0" stop-color="#d8d8d8"/><stop offset="1" stop-color="#c6c6c6"/></linearGradient><linearGradient id="br9" x1="0" y1="0" x2="1" y2="0"><stop offset="0" stop-color="#8e8e8e"/><stop offset="1" stop-color="#626262"/></linearGradient><linearGradient id="bb9" x1="0" y1="0" x2="0" y2="1"><stop offset="0" stop-color="#a0a0a0"/><stop offset="1" stop-color="#727272"/></linearGradient></defs><path d="M1 1H30.80L27.30 4.500H4.500Z" fill="url(#bt9)"/><path d="M1 1V28.60L4.500 25.10V4.500Z" fill="url(#bl9)"/><path d="M30.80 1V28.60L27.30 25.10V4.500Z" fill="url(#br9)"/><path d="M1 28.60H30.80L27.30 25.10H4.500Z" fill="url(#bb9)"/></svg><svg style="position:absolute;left:633px;top:653.1px" width="31.80" height="29.60" viewBox="0 0 31.80 29.60"><defs><linearGradient id="gx" x1="0" y1="0" x2="0" y2="1"><stop offset="0" stop-color="#b64a4a"/><stop offset="1" stop-color="#d49a9a"/></linearGradient></defs><rect x="5.600" y="4.600" width="21.6" height="21.4" rx="5.500" fill="#a02c2c"/><rect x="6.800" y="5.400" width="18.8" height="18.8" rx="4.500" fill="url(#gx)" stroke="#fbe0e0" stroke-width="1.300"/><path d="M11.600 9.700l9.600 10.600M21.200 9.700l-9.600 10.600" stroke="#fff" stroke-width="2.700"/></svg>
<div style="position:absolute;left:864.70px;top:545.50px;font-size:11px;line-height:11px;color:#000;white-space:nowrap;">Battery charge</div>
<svg style="position:absolute;left:809.20px;top:560.80px" width="184.10" height="23.40" viewBox="0 0 184.10 23.40"><path d="M0.00 23.40L184.10 23.40L184.10 0.00L182.60 1.50L182.60 21.90L1.55 21.90Z" fill="#d8d8d8"/><path d="M0.00 0.00L184.10 0.00L182.60 1.50L1.55 1.50L1.55 21.90L0.00 23.40Z" fill="#b8b8b8"/><path d="M1.55 21.90L182.60 21.90L182.60 1.50L181.10 3.00L181.10 20.40L3.10 20.40Z" fill="#e5e5e5"/><path d="M1.55 1.50L182.60 1.50L181.10 3.00L3.10 3.00L3.10 20.40L1.55 21.90Z" fill="#929292"/><rect x="3.10" y="3.00" width="178.00" height="17.40" fill="#a8a8a8"/></svg>
<svg style="position:absolute;left:812px;top:564px" width="180" height="17" viewBox="0 0 180 17"><defs><linearGradient id="gb" x1="0" y1="0" x2="0" y2="1"><stop offset="0" stop-color="#ff9d20"/><stop offset="0.45" stop-color="#ff9818"/><stop offset="0.75" stop-color="#e07c08"/><stop offset="1" stop-color="#9a5200"/></linearGradient></defs><rect x="1" y="0.200" width="176.8" height="16.6" fill="url(#gb)"/><rect x="11.07" y="0" width="1" height="17" fill="#a9814e"/><rect x="22.14" y="0" width="1" height="17" fill="#a9814e"/><rect x="33.21" y="0" width="1" height="17" fill="#a9814e"/><rect x="44.28" y="0" width="1" height="17" fill="#a9814e"/><rect x="55.35" y="0" width="1" height="17" fill="#a9814e"/><rect x="66.42" y="0" width="1" height="17" fill="#a9814e"/><rect x="77.49" y="0" width="1" height="17" fill="#a9814e"/><rect x="88.56" y="0" width="1" height="17" fill="#a9814e"/><rect x="99.63" y="0" width="1" height="17" fill="#a9814e"/><rect x="110.70" y="0" width="1" height="17" fill="#a9814e"/><rect x="121.77" y="0" width="1" height="17" fill="#a9814e"/><rect x="132.84" y="0" width="1" height="17" fill="#a9814e"/><rect x="143.91" y="0" width="1" height="17" fill="#a9814e"/><rect x="154.98" y="0" width="1" height="17" fill="#a9814e"/><rect x="166.05" y="0" width="1" height="17" fill="#a9814e"/></svg>
<div style="position:absolute;left:889.70px;top:591.50px;font-size:11px;line-height:11px;color:#000;white-space:nowrap;transform:scale(0.9814,1.0000);transform-origin:left 9.50px;">External power</div>
<div style="position:absolute;left:977.9px;top:589.9px;width:14.2px;height:14.2px;border-radius:50%;background:radial-gradient(circle at 36% 32%,#a6ff76 0,#64f81e 22%,#58f014 62%,#2f9c0c 100%);box-shadow:1.3px 1.6px 0 0.2px #f6f6f6,-0.5px -0.5px 0 0.5px #b6b6bc;"></div>
<svg style="position:absolute;left:840px;top:612px" width="70" height="66" viewBox="0 0 507 478">
<path d="M165 86L322 98L345 120L250 132L232 180L205 235L240 300L300 310L235 392L172 325Z" fill="#808080"/>
<path d="M152 86L70 232L160 347L205 262L190 235L236 178Z" fill="#fff"/>
<path d="M252 130L347 113L442 225L350 372L233 397L322 238Z" fill="#fff"/>
<path d="M262 183A57 57 0 1 0 262 297L312 238Z" fill="#f5901e"/>
<path d="M205 270q15 32 55 30" fill="none" stroke="#fff" stroke-width="6"/>
</svg>
<div style="position:absolute;left:904.90px;top:634.00px;font-size:20px;line-height:20px;color:#fff;white-space:nowrap;transform:scale(0.8940,1.0000);transform-origin:left 17.00px;-webkit-text-stroke:0.35px #fff;">voyantic</div>
</div></body></html>
